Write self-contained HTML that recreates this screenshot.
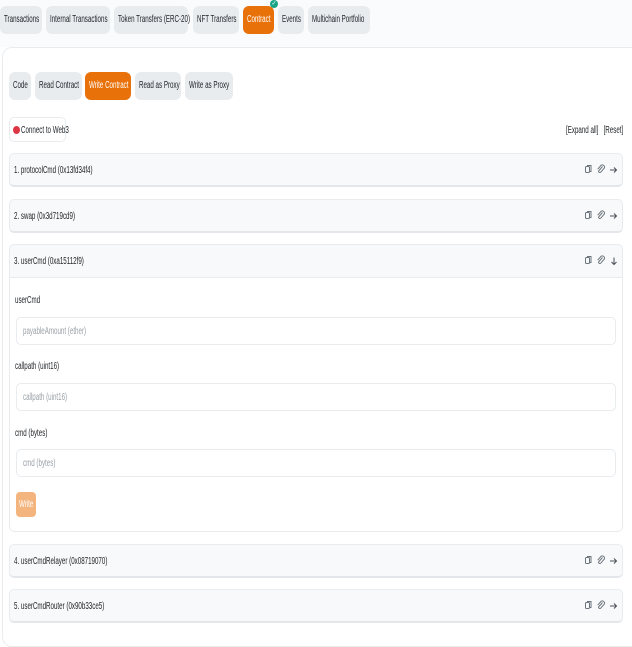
<!DOCTYPE html>
<html><head><meta charset="utf-8"><style>
*{box-sizing:border-box;margin:0;padding:0}
body{width:632px;height:632px;background:#fff;font-family:"Liberation Sans",sans-serif;font-size:10px;color:#212529;position:relative;overflow:hidden}
.a{position:absolute}
.t{display:block;transform:scaleX(.62);transform-origin:left center;white-space:nowrap}
.tab{position:absolute;height:28px;background:#e9ecef;border-radius:6px;padding-left:4px;padding-top:8px;color:#212529;overflow:visible}
.on{background:#e8710a;color:#fff}
.row{position:absolute;left:9px;width:614px;height:34px;background:#f8f9fa;border:1px solid #e9ecef;border-bottom:2px solid #e3e6ea;border-radius:5px;padding-left:4px;padding-top:11px}
.ic{position:absolute;right:0px;top:10px}
.inp{position:absolute;left:16px;width:600px;height:28px;border:1px solid #e9ecef;border-radius:5px;padding-left:6px;padding-top:8px;color:#9aa0a6}
.lab{position:absolute;left:15px}
</style></head><body>
<svg width="0" height="0" style="position:absolute"><defs>
<g id="cp" fill="none" stroke="#6c757d" stroke-width="1"><rect x="1.5" y="2.5" width="4" height="6" rx="1"/><path d="M3.5 2.5V1.5h3.5v6H5.5"/></g>
<g id="lk" fill="none" stroke="#6c757d" stroke-width="1"><path d="M6.5 2.5l-3.5 4a1.2 1.2 0 0 0 1.7 1.7l3.5-4a2.2 2.2 0 0 0-3-3l-3.5 4"/></g>
</defs></svg>
<div class="a" style="left:0;top:0;width:632px;height:47px;background:#fafbfc"></div>
<div class="tab" style="left:0;top:6px;width:42px"><span class="t">Transactions</span></div>
<div class="tab" style="left:46px;top:6px;width:64px"><span class="t">Internal Transactions</span></div>
<div class="tab" style="left:114px;top:6px;width:74px"><span class="t">Token Transfers (ERC-20)</span></div>
<div class="tab" style="left:193px;top:6px;width:46px"><span class="t">NFT Transfers</span></div>
<div class="tab on" style="left:243px;top:6px;width:31px"><span class="t">Contract</span></div>
<div class="a" style="left:270px;top:0;width:8px;height:8px;border-radius:50%;background:#1aa587;color:#fff;font-size:6px;text-align:center;line-height:8px">✓</div>
<div class="tab" style="left:278px;top:6px;width:26px"><span class="t">Events</span></div>
<div class="tab" style="left:308px;top:6px;width:62px"><span class="t">Multichain Portfolio</span></div>
<div class="a" style="left:2px;top:47px;width:640px;height:600px;border:1px solid #e9ecef;border-radius:10px;background:#fff"></div>
<div class="tab" style="left:9px;top:72px;width:22px"><span class="t">Code</span></div>
<div class="tab" style="left:35px;top:72px;width:47px"><span class="t">Read Contract</span></div>
<div class="tab on" style="left:85px;top:72px;width:46px"><span class="t">Write Contract</span></div>
<div class="tab" style="left:135px;top:72px;width:46px"><span class="t">Read as Proxy</span></div>
<div class="tab" style="left:185px;top:72px;width:48px"><span class="t">Write as Proxy</span></div>
<div class="a" style="left:9px;top:117px;width:57px;height:25px;border:1px solid #e9ecef;border-radius:5px;padding-left:11px;padding-top:7px"><span class="a" style="left:3px;top:8px;width:7px;height:8px;border-radius:50%;background:#dc3545"></span><span class="t">Connect to Web3</span></div>
<div class="a" style="left:566px;top:125px"><span class="t">[Expand all]&nbsp;&nbsp;&nbsp;[Reset]</span></div>
<div class="row" style="top:153px"><span class="t">1. protocolCmd (0x13fd34f4)</span><svg class="ic" width="40" height="12"><use href="#cp" x="2"/><use href="#lk" x="14"/><path d="M28 6h6M32 3.5l2.5 2.5L32 8.5" stroke="#495057" fill="none"/></svg></div>
<div class="row" style="top:199px"><span class="t">2. swap (0x3d719cd9)</span><svg class="ic" width="40" height="12"><use href="#cp" x="2"/><use href="#lk" x="14"/><path d="M28 6h6M32 3.5l2.5 2.5L32 8.5" stroke="#495057" fill="none"/></svg></div>
<div class="a" style="left:9px;top:244px;width:614px;height:288px;border:1px solid #e9ecef;border-radius:5px"></div>
<div class="row" style="top:244px;border-bottom:1px solid #e9ecef;border-radius:5px 5px 0 0"><span class="t">3. userCmd (0xa15112f9)</span><svg class="ic" width="40" height="12"><use href="#cp" x="2"/><use href="#lk" x="14"/><path d="M32 2.5v7M29.5 7l2.5 2.5L34.5 7" stroke="#495057" fill="none"/></svg></div>
<div class="lab" style="top:295px"><span class="t">userCmd</span></div>
<div class="inp" style="top:317px"><span class="t">payableAmount (ether)</span></div>
<div class="lab" style="top:361px"><span class="t">callpath (uint16)</span></div>
<div class="inp" style="top:383px"><span class="t">callpath (uint16)</span></div>
<div class="lab" style="top:428px"><span class="t">cmd (bytes)</span></div>
<div class="inp" style="top:449px"><span class="t">cmd (bytes)</span></div>
<div class="a" style="left:16px;top:492px;width:20px;height:25px;background:#f4b47e;border-radius:4px;color:#fff;padding-left:3px;padding-top:7px"><span class="t">Write</span></div>
<div class="row" style="top:544px"><span class="t">4. userCmdRelayer (0x08719070)</span><svg class="ic" width="40" height="12"><use href="#cp" x="2"/><use href="#lk" x="14"/><path d="M28 6h6M32 3.5l2.5 2.5L32 8.5" stroke="#495057" fill="none"/></svg></div>
<div class="row" style="top:589px"><span class="t">5. userCmdRouter (0x90b33ce5)</span><svg class="ic" width="40" height="12"><use href="#cp" x="2"/><use href="#lk" x="14"/><path d="M28 6h6M32 3.5l2.5 2.5L32 8.5" stroke="#495057" fill="none"/></svg></div>
</body></html>
